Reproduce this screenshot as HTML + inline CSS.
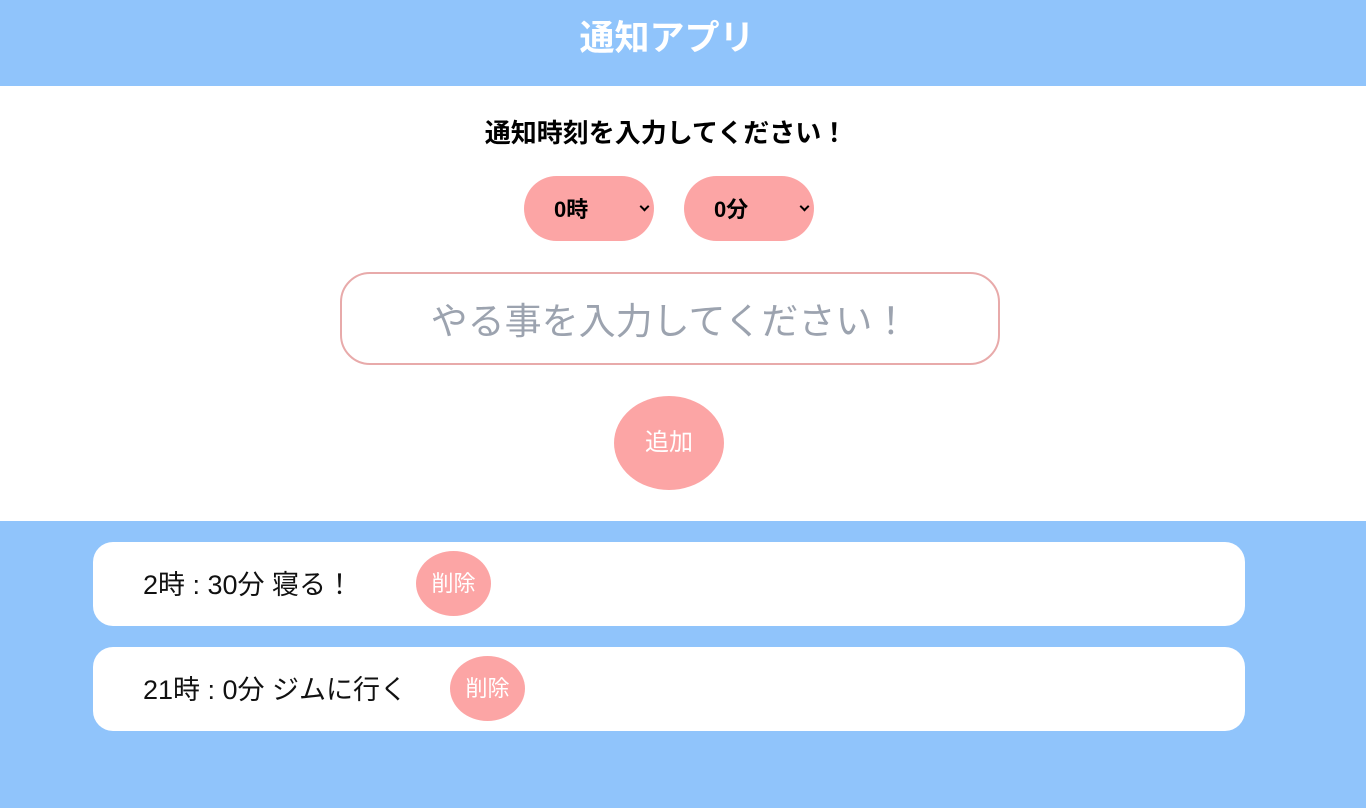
<!DOCTYPE html>
<html><head><meta charset="utf-8"><style>
*{margin:0;padding:0;box-sizing:border-box}
body{width:1366px;height:808px;position:relative;background:#fff;font-family:"Liberation Sans","Noto Sans CJK JP",sans-serif;overflow:hidden}
.a{position:absolute}
.hdr{left:0;top:0;width:1334px;height:86px;background:#90c4fb;color:#fff;font-weight:bold;font-size:35px;text-align:center;line-height:78px}
.hbg{left:0;top:0;width:1366px;height:86px;background:#90c4fb}
.blue{left:0;top:521px;width:1366px;height:287px;background:#90c4fb}
.h2{left:0;width:1332px;top:114px;text-align:center;font-size:26px;font-weight:bold;line-height:38px;color:#000}
.sel{top:176px;height:65px;width:130px;background:#fca5a5;border-radius:33px;font-size:22px;font-weight:bold;line-height:67px;color:#000}
.sel span{position:absolute;left:30px}
.sel i{position:absolute;right:6px;top:27px;width:7px;height:7px;border-right:2px solid #000;border-bottom:2px solid #000;transform:rotate(45deg)}
.inp{left:340px;top:272px;width:660px;height:93px;border:2px solid #e8aaaa;border-radius:30px;text-align:center;font-size:37px;line-height:95px;color:#9ca3af}
.add{left:614px;top:396px;width:110px;height:94px;border-radius:50%;background:#fca5a5;color:#fff;font-size:24px;text-align:center;line-height:94px}
.card{left:93px;width:1152px;height:84px;background:#fff;border-radius:20px}
.card .t{position:absolute;left:50px;top:0;line-height:86px;font-size:27px;color:#111}
.del{width:75px;height:65px;border-radius:50%;background:#fca5a5;color:#fff;font-size:22px;text-align:center;line-height:65px}
</style></head><body>
<div class="a hbg"></div>
<div class="a hdr">通知アプリ</div>
<div class="a h2">通知時刻を入力してください！</div>
<div class="a sel" style="left:524px"><span>0時</span><i></i></div>
<div class="a sel" style="left:684px"><span>0分</span><i></i></div>
<div class="a inp">やる事を入力してください！</div>
<div class="a add">追加</div>
<div class="a blue"></div>
<div class="a card" style="top:542px"><div class="t">2時 : 30分 寝る！</div></div>
<div class="a del" style="left:416px;top:551px">削除</div>
<div class="a card" style="top:647px"><div class="t">21時 : 0分 ジムに行く</div></div>
<div class="a del" style="left:450px;top:656px">削除</div>
</body></html>
